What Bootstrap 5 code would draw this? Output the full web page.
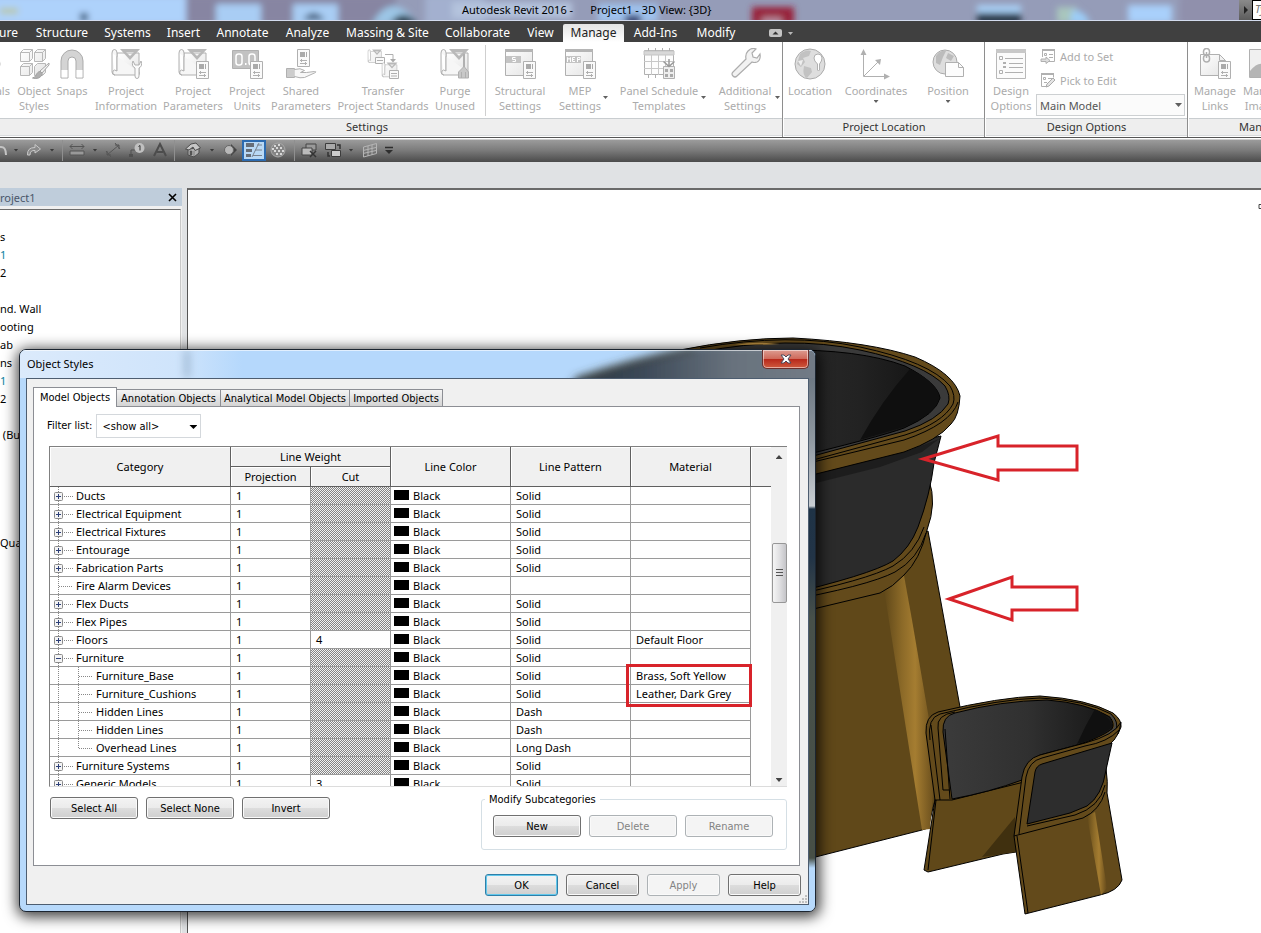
<!DOCTYPE html>
<html lang="en">
<head>
<meta charset="utf-8">
<meta name="viewport" content="width=device-width, initial-scale=1">
<title>Autodesk Revit 2016 - Project1 - 3D View: {3D}</title>
<link href="https://cdn.jsdelivr.net/npm/bootstrap@5.3.0/dist/css/bootstrap.min.css" rel="stylesheet">
<style>
  body { font: 11px/15px "Noto Sans", "Open Sans", sans-serif; color: #000; background: #e0e2e4; }
  button { font: inherit; color: inherit; background: none; border: 0; padding: 0; }
  svg { display: block; flex: none; }
  .tahoma { font-family: "DejaVu Sans Condensed", "Noto Sans", sans-serif; }

  /* title bar */
  .app-title { height: 21px; background: #959cb8; border-bottom: 1px solid #d3dbee; }
  .app-title .caption { padding-left: 462px; line-height: 20px; white-space: pre; }
  .search-area { width: 22px; background: linear-gradient(#8a8a8a, #5c5c5c); }
  .search-box { width: 9px; border: 1px solid #000; background: #fff; color: #777; font-style: italic; padding: 0 0 0 2px; border-right: 0; }

  /* ribbon tabs */
  .ribbon-tabs { height: 21px; background: #404040; color: #fff; padding-top: 3px; }
  .ribbon-tabs a { color: #fff; text-decoration: none; text-align: center; line-height: 17px; font-size: 12px; flex: none; height: 18px; white-space: nowrap; }
  .ribbon-tabs a.current { background: linear-gradient(#e4e4e4, #fff); color: #222; border-radius: 2px 2px 0 0; }
  .t28 { width: 28px; direction: rtl; overflow: hidden; padding-right: 10px; }
  .t49 { width: 49px; } .t45 { width: 45px; } .t58 { width: 58px; } .t61 { width: 61px; } .t63 { width: 63px; } .t68 { width: 68px; }
  .t69 { width: 69px; } .t81 { width: 81px; } .t99 { width: 99px; }

  /* ribbon */
  .ribbon { background: #fff; height: 95px; }
  .rpanel { border-right: 1px solid #8e8e8e; margin-right: 1px; flex: none; }
  .rpanel-first { margin-left: -48px; }
  .rpanel-body { height: 76px; }
  .rpanel-name { height: 18px; line-height: 16px; background: #eeeeee; border-top: 1px solid #c9cdd0; border-bottom: 1px solid #dadcde; text-align: center; color: #333; }
  .rbtn { color: #ababab; display: flex; flex-direction: column; align-items: center; padding-top: 6px; flex: none; position: relative; white-space: nowrap; }
  .rbtn svg { margin-bottom: 3px; }
  .rbtn .tri { margin: 2px 0 0; }
  .rbtn .tri-side { position: absolute; right: 2px; top: 54px; margin: 0; }
  .tri { width: 5px; height: 3px; background: #606060; clip-path: polygon(0 0, 100% 0, 50% 100%); flex: none; }
  .r36 { width: 36px; } .r40 { width: 40px; } .r42 { width: 42px; } .r46 { width: 46px; } .r48 { width: 48px; } .r52 { width: 52px; }
  .r60 { width: 60px; } .r66 { width: 66px; } .r68 { width: 68px; } .r72 { width: 72px; } .r74 { width: 74px; } .r98 { width: 98px; }
  .rsep { width: 1px; background: #cfcfcf; margin: 3px 4px 2px 7px; }
  .rstack { padding: 2px 2px 0 0; }
  .rline { color: #ababab; height: 24px; }
  .model-select { width: 149px; height: 22px; border: 1px solid #cdd0d2; border-radius: 0; appearance: none; background: #fbfbfb; color: #555; padding: 0 3px; margin-top: 2px; font-size: 11px; display: block; }
  .model-tri { position: absolute; right: 3px; top: 11px; width: 7px; height: 4px; background: #606060; clip-path: polygon(0 0, 100% 0, 50% 100%); pointer-events: none; }
  .rpanel-last { width: 182px; }

  /* quick access bar */
  .qat { height: 25px; border-top: 1px solid #555; background: linear-gradient(#fff 0 1px, #9b9b9b 2px, #7c7c7c 50%, #4b4b4b); }
  .qat button { display: flex; align-items: center; justify-content: center; height: 20px; flex: none; }
  .q10 { width: 10px; } .q12 { width: 12px; } .q16 { width: 16px; } .q20 { width: 20px; } .q24 { width: 24px; } .q27 { width: 27px; }
  .qat .tri { background: #3a3a3a; }
  .qsep { width: 1px; height: 21px; background: #8f8f8f; flex: none; }
  .qat .picked { background: #b9d9f5; border: 2px solid #2c6bb0; height: 21px; }
  .options-bar { height: 26px; background: #e0e2e4; }

  /* project browser */
  .browser { width: 182px; flex: none; background: #f0f0f0; }
  .browser-head { height: 18px; background: #bfcddb; color: #49566a; padding-right: 5px; }
  .browser-list { margin: 3px 1px 0 0; border-top: 1px solid #6d6d6d; border-right: 1px solid #c8c8c8; background: #fff; line-height: 18px; padding-top: 18px; overflow: hidden; white-space: nowrap; }
  .browser-list li { height: 18px; }
  .cyan { color: #0a7f9e; }
  .canvas { margin-left: 5px; border-left: 1px solid #555; border-top: 2px solid #6a6a6a; background: #fff; overflow: hidden; }

  /* object styles window */
  .dlg { position: absolute; left: 19px; top: 161px; width: 797px; border: 1px solid #1c2530; border-radius: 7px; overflow: hidden; background: #b7d9fb; }
  .dlg-shadow { position: absolute; left: 19px; top: 161px; width: 797px; height: 562px; border-radius: 7px; box-shadow: 1px 3px 14px 3px rgba(0,0,0,.75); }
  .dlg-title { height: 28px; padding-left: 7px; line-height: 27px; position: relative; }
  .dlg-glass { position: absolute; inset: 0; }
  .dlg-edge { position: absolute; right: 0; top: 28px; bottom: 0; width: 7px; background: linear-gradient(#6d7883, #8e979f 60px, #c9ced3 128px, #1f3346 131px, #223447 180px, #47504a 240px, #474f46 480px, #b7d9fb 490px); }
  .dlg-close { position: absolute; right: 6px; top: 0; width: 47px; height: 19px; border: 1px solid #6b2f2c; border-top: 0; border-radius: 0 0 5px 5px; background: linear-gradient(#dd9c91, #cf6a5b 48%, #b8291b 52%, #cf5a3e); box-shadow: inset 0 0 0 1px rgba(255,255,255,.5); display: flex; align-items: center; justify-content: center; }
  .client { margin: 0 6px 6px; position: relative; background: #f0f0f0; border: 1px solid #4d5d70; padding: 8px 7px 8px 6px; }
  .tabstrip { height: 19px; }
  .tabstrip button { border: 1px solid #8c8e94; border-left: 0; border-bottom: 0; height: 17px; line-height: 15px; background: linear-gradient(#f4f4f4, #d4d4d4); white-space: nowrap; }
  .tabstrip button.active { height: 20px; background: #fff; border-left: 1px solid #8c8e94; position: relative; margin-bottom: -1px; }
  .w84 { width: 84px; } .w104 { width: 104px; } .w129 { width: 129px; } .w93 { width: 93px; }
  .sheet { border: 1px solid #8c8e94; background: #fff; padding: 7px 12px 15px 13px; margin-right: 1px; }
  .filter-select { width: 105px; height: 24px; appearance: none; border: 1px solid #d4d8dc; border-radius: 0; background: #fff; padding: 0 5px; }
  .filter-tri { position: absolute; right: 4px; top: 11px; width: 8px; height: 4px; background: #000; clip-path: polygon(0 0, 100% 0, 50% 100%); pointer-events: none; }
  .gridbox { height: 341px; margin-left: 2px; border-top: 1px solid #808080; border-left: 1px solid #808080; border-bottom: 1px solid #dcdcdc; overflow: hidden; position: relative; }
  .styles { border-collapse: separate; border-spacing: 0; table-layout: fixed; width: 721px; line-height: 17px; font-family: "Noto Sans", sans-serif; }
  .styles th { font-weight: 400; background: #f0f0f0; text-align: center; border-right: 1px solid #606060; border-bottom: 1px solid #606060; height: 20px; padding: 0; box-shadow: inset 1px 1px #fff; }
  .styles td { height: 18px; padding: 0 0 0 5px; border-right: 1px solid #9a9a9a; border-bottom: 1px solid #9a9a9a; white-space: nowrap; }
  .styles th:last-child, .styles td:last-child { border-right: 0; }
  .styles thead tr:last-child th:last-child { border-right: 1px solid #606060; }
  .styles th.filler { border-right: 0; }
  .styles td:last-child { border-bottom: 0; }
  .styles td.tree { padding: 0; }
  .styles td.na { background: repeating-conic-gradient(#848484 0 25%, #f2f2f2 0 50%) 0 0 / 2px 2px; }
  .styles td.ink { padding-left: 3px; }
  .swatch { display: inline-block; width: 15px; height: 10px; background: #000; margin-right: 4px; }
  .sbar { width: 16px; background: #f0f0f0; }
  .tri-up { width: 7px; height: 4px; background: #444; clip-path: polygon(50% 0, 100% 100%, 0 100%); margin-bottom: 84px; }
  .tri-down { width: 7px; height: 4px; background: #444; clip-path: polygon(0 0, 100% 0, 50% 100%); }
  .thumb { width: 15px; height: 60px; border: 1px solid #979797; border-radius: 2px; background: linear-gradient(90deg, #f5f5f5, #e0e0e2 50%, #c4c4c8); }
  .callout { position: absolute; left: 576px; top: 217px; width: 126px; height: 43px; border: 3px solid #d8232a; }
  .wbtn { width: 88px; height: 22px; border: 1px solid #707070; border-radius: 3px; background: linear-gradient(#f3f3f3, #ebebeb 50%, #dddddd 50%, #cfcfcf); box-shadow: inset 0 0 0 1px #fafafa; }
  .wbtn:disabled { color: #838383; border-color: #adb2b5; background: #f4f4f4; }
  .wbtn-s { width: 73px; }
  .wbtn-ok { border-color: #2f7fa8; box-shadow: inset 0 0 0 1px #62c8ec; }
  .pickers { padding: 10px 0 0 3px; }
  .subcats { border: 1px solid #d5dfe5; border-radius: 3px; width: 306px; padding: 8px 11px 12px; margin: 5px 0 0; }
  .subcats legend { float: none; width: auto; font-size: inherit; line-height: 15px; padding: 0 4px; margin: 0 0 0 -8px; }
  .grip { position: absolute; right: 1px; bottom: 1px; }
</style>
</head>
<body class="min-vh-100 d-flex flex-column overflow-hidden">

<!-- icon shapes -->
<svg width="0" height="0" class="position-absolute" aria-hidden="true">
  <defs>
    <linearGradient id="metal" x2="1" y2="1"><stop offset="0" stop-color="#fff"/><stop offset="1" stop-color="#e4e4e4"/></linearGradient>
    <g id="scroll-base"><path d="M7 5h22v21H7z" fill="url(#metal)"/><path d="M2 5q0-3.500 2.500-3.500T7 5v18q-3-2-4 0t1 4H29v-3M2 5v19q0 3 3 3" fill="#f6f6f6"/><path d="M10 1H30L20 12zM16 4l4 4 4-4z" fill="#b9b9b9" fill-rule="evenodd" stroke="none"/></g>
    <g id="sheet-tag"><path d="M19.500 13.500h12v17h-12z" fill="#fafafa"/><path d="M22 16h5v5h-5zM28 16h1v5h-1z" fill="#aaa" stroke="none"/><path d="M22 24.500h7M22 27.500h7M23.500 23v3M27.500 26v3"/></g>
    <g id="win"><path d="M1.500 1.500h27v26h-27z" fill="url(#metal)"/><path d="M1 1h28v3H1z" fill="#b5b5b5" stroke="none"/></g>
    <symbol id="i-materials" viewBox="0 0 32 32"><circle cx="16" cy="16" r="14" fill="#eee" stroke="#b3b3b3"/></symbol>
    <symbol id="i-object" viewBox="0 0 32 32"><g fill="url(#metal)" stroke="#b8b8b8"><path d="M2.500 4.500l3-3h9v9l-3 3h-9zM16.500 4.500l3-3h8v9l-3 3h-8zM2.500 18.500l3-3h9v9l-3 3h-9zM16.500 18.500l3-3h8v9l-3 3h-8z"/><path d="M2.500 4.500h9l3-3M11.500 4.500v9M16.500 4.500h8l3-3M24.500 4.500v9M2.500 18.500h9l3-3M11.500 18.500v9" fill="none"/><path d="M31 15l-9 8 2 2 7-8z" fill="#f4f4f4" stroke="#a5a5a5"/><path d="M21.500 23l3 3q-3 6-10 4 4-1 4-4z" fill="#b0b0b0" stroke="#a0a0a0"/></g></symbol>
    <symbol id="i-snaps" viewBox="0 0 32 32"><path d="M5 30V13a11 11 0 0 1 22 0v17h-7V13a4 4 0 0 0-8 0v17z" fill="#d4d4d4" stroke="#ababab"/><path d="M5.500 22h6v7.500h-6zM20.500 22h6v7.500h-6z" fill="#fff"/></symbol>
    <symbol id="i-info" viewBox="0 0 32 32"><g fill="none" stroke="#b0b0b0"><use href="#scroll-base"/><path d="M23 13q-2 5 2 7v8q0 2.500 2 2.500t2-2.500v-8q4-2 2-7l-2 4h-4z" fill="#fafafa"/></g></symbol>
    <symbol id="i-param" viewBox="0 0 32 32"><g fill="none" stroke="#b0b0b0"><use href="#scroll-base"/><use href="#sheet-tag"/></g></symbol>
    <symbol id="i-units" viewBox="0 0 32 32"><g fill="none" stroke="#b0b0b0"><path d="M1.500 2.500h26v18h-26z" fill="#c2c2c2"/><rect x="5" y="6" width="6" height="11" rx="2.500" stroke="#fff" stroke-width="1.500"/><path d="M14 16h1.500" stroke="#fff" stroke-width="2"/><rect x="18" y="6" width="6" height="11" rx="2.500" stroke="#fff" stroke-width="1.500"/><use href="#sheet-tag"/></g></symbol>
    <symbol id="i-shared" viewBox="0 0 32 32"><g fill="none" stroke="#b0b0b0"><use href="#sheet-tag" transform="translate(-7 -12)"/><path d="M1.500 20.500h8v9h-8z" fill="#ccc"/><path d="M9.500 21.500q6-2 10 1l-4 2h6l8-1q2 0 1 1l-11 5q-4 1-10-1" fill="#f7f7f7"/></g></symbol>
    <symbol id="i-transfer" viewBox="0 0 32 32"><g fill="none" stroke="#b0b0b0"><use href="#scroll-base" transform="translate(0 1) scale(.5)"/><path d="M8.500 9.500h9v6h-9z" fill="#fafafa"/><path d="M10 12.500h6M18 6.500h8v6"/><path d="M23 11h6l-3 3.500z" fill="#aaa" stroke="none"/><use href="#scroll-base" transform="translate(14 14) scale(.55)"/><path d="M22.500 22.500h9v8h-9z" fill="#fafafa"/><path d="M24 25.500h6M24 28h6"/></g></symbol>
    <symbol id="i-purge" viewBox="0 0 32 32"><g fill="none" stroke="#b0b0b0"><use href="#scroll-base"/><path d="M24.500 6h1v13l4 5v6h-10v-6l5-5z" fill="#c8c8c8"/><path d="M22.500 24v6M26.500 24v6"/></g></symbol>
    <symbol id="i-struct" viewBox="0 0 32 32"><g fill="none" stroke="#b0b0b0"><use href="#win"/><path d="M2 8h15v7H2z" fill="#c4c4c4" stroke="none"/><path d="M11.500 9.500h-3v2h3v2h-3" stroke="#fff"/><use href="#sheet-tag"/></g></symbol>
    <symbol id="i-mep" viewBox="0 0 32 32"><g fill="none" stroke="#b0b0b0"><use href="#win"/><path d="M2 8h15v7H2z" fill="#c4c4c4" stroke="none"/><path d="M3.500 14V9.500l1.500 2 1.500-2V14M11 9.500H8.500v4H11M8.500 11.500h2M13.500 14V9.500H16v2h-2" stroke="#fff"/><use href="#sheet-tag"/></g></symbol>
    <symbol id="i-panel" viewBox="0 0 32 32"><g fill="none" stroke="#b0b0b0"><path d="M1.500 2.500h29v24h-29z" fill="#fdfdfd"/><path d="M1 3h30v4H1z" fill="#d8d8d8" stroke="#c4c4c4"/><path d="M1 13.500h30M1 20.500h30M8.500 7v20M15.500 7v20M22.500 7v20" stroke="#c8c8c8"/><path d="M5.500 0v3M12.500 0v3M19.500 0v3M26.500 0v3M5.500 27v3M12.500 27v3"/><path d="M20.500 18.500h11v12h-11z" fill="#eee"/><path d="M22 21h3v3h-3zM27 21h3v3h-3zM22 26h3v3h-3zM27 26h3v3h-3z" fill="#aaa" stroke="none"/><path d="M26 11v7M20.500 13.500l5.500 5 5.500-5" stroke="#999" stroke-width="1.500"/></g></symbol>
    <symbol id="i-wrench" viewBox="0 0 32 32"><path d="M19 3q4-4 8-2l-4 4 1 4 4 1 3-4q1 6-3 8-3 1-5 0L8 28q-2 2-4 0t0-4L17 11q-1-5 2-8z" fill="#f2f2f2" stroke="#adadad" stroke-width="1.200"/></symbol>
    <symbol id="i-globe" viewBox="0 0 32 32"><circle cx="16" cy="16" r="15" fill="#dedede" stroke="#ababab"/><path d="M6 6q6-5 11-3l-2 5-6 2 2 4-4 5-4-3zM10 18l7 2 1 4-5 6q-5-2-3-12z" fill="#c2c2c2"/><path d="M4 13l5-1-2 6z" fill="#eee"/><path d="M20 10a4 4 0 0 1 8 0q0 3-2.500 6v6l-1 1-1-1v-6Q20 13 20 10z" fill="#fff" stroke="#b0b0b0"/></symbol>
    <symbol id="i-coord" viewBox="0 0 32 32"><g fill="none" stroke="#b0b0b0"><path d="M3.500 5v23.500H28M4 28L18 14"/></g><path d="M3.500 1L6.500 7h-6zM30 28.500l-6 3v-6zM21 11l-1 6-5-5z" fill="#b0b0b0"/></symbol>
    <symbol id="i-pos" viewBox="0 0 32 32"><circle cx="13" cy="14" r="12" fill="#dedede" stroke="#ababab"/><path d="M4 8q4-6 10-5l-3 6-3 8-4-2zM16 5l6 3-3 5-5-3z" fill="#bcbcbc"/><path d="M13.500 14.500h13l5 5v9h-18z" fill="#fcfcfc" stroke="#b0b0b0"/><path d="M26.500 14.500v5h5" fill="none" stroke="#b0b0b0"/></symbol>
    <symbol id="i-design" viewBox="0 0 32 32"><path d="M1.500 1.500h29v29h-29z" fill="#fbfbfb" stroke="#b8b8b8"/><path d="M1 1h30v4H1z" fill="#c8c8c8"/><g stroke="#b0b0b0" fill="none"><path d="M4.500 8.500h3v3h-3zM4.500 22.500h3v3h-3zM10 10.500h18M14 15.500h14M14 19.500h14M10 24.500h18"/></g><path d="M8 14h3v2H8zM8 18h3v2H8z" fill="#b0b0b0"/></symbol>
    <symbol id="i-links" viewBox="0 0 32 32"><g fill="none" stroke="#b0b0b0"><path d="M1.500 6.500h19l6 6v15h-25z" fill="url(#metal)"/><path d="M20.500 6.500v6h6"/><use href="#sheet-tag"/><rect x="4.500" y=".5" width="6" height="7" rx="3" stroke-width="1.500"/><rect x="4.500" y="7" width="6" height="7" rx="3" stroke-width="1.500"/><path d="M7.500 4v6" stroke-width="1.500"/></g></symbol>
    <symbol id="i-images" viewBox="0 0 32 32"><path d="M1.500 1.500h29v28h-29z" fill="#f0f0f0" stroke="#b0b0b0"/><path d="M2 23q10-12 17-4l11 10H2z" fill="#b5b5b5"/></symbol>
    <symbol id="i-addset" viewBox="0 0 16 16"><path d="M2.500 1.500h12v12h-7" fill="none" stroke="#b0b0b0"/><path d="M2 1h13v2H2z" fill="#b0b0b0"/><path d="M2.500 3v6M4.500 5.500h2v2h-2zM9 6.500h4M9 9.500h4" fill="none" stroke="#b0b0b0"/><path d="M1 11h5V9l4 3.500L6 15.500v-2H1z" fill="#ddd" stroke="#b0b0b0"/></symbol>
    <symbol id="i-pick" viewBox="0 0 16 16"><path d="M8 14.500H1.500v-13h12v4" fill="none" stroke="#b0b0b0"/><path d="M1 1h13v2H1z" fill="#b0b0b0"/><path d="M3.500 5.500h2v2h-2zM8 6.500h4M4 10.500h3" fill="none" stroke="#b0b0b0"/><path d="M7 12l6-6 2 2-6 6-3 1z" fill="#e4e4e4" stroke="#aaa"/></symbol>
    <symbol id="t-plus" viewBox="0 0 26 17"><path d="M8.500 0v17M14 9.500h9" stroke="#888" stroke-dasharray="1 1"/><rect x="4.500" y="5.500" width="8" height="8" rx="1" fill="#f4f4f4" stroke="#8a8a8a"/><path d="M6 9.500h5M8.500 7v5" stroke="#2c3f78"/></symbol>
    <symbol id="t-minus" viewBox="0 0 26 17"><path d="M8.500 0v17M14 9.500h9" stroke="#888" stroke-dasharray="1 1"/><rect x="4.500" y="5.500" width="8" height="8" rx="1" fill="#f4f4f4" stroke="#8a8a8a"/><path d="M6 9.500h5" stroke="#2c3f78"/></symbol>
    <symbol id="t-leaf" viewBox="0 0 26 17"><path d="M8.500 0v17M9 9.500h14" stroke="#888" stroke-dasharray="1 1"/></symbol>
    <symbol id="t-child" viewBox="0 0 46 17"><path d="M8.500 0v17M28.500 0v17M29 9.500h14" stroke="#888" stroke-dasharray="1 1"/></symbol>
    <symbol id="t-last" viewBox="0 0 46 17"><path d="M8.500 0v17M28.500 0v10M29 9.500h14" stroke="#888" stroke-dasharray="1 1"/></symbol>
  </defs>
</svg>

<header>
  <div class="app-title d-flex position-relative overflow-hidden">
    <svg class="position-absolute top-0 start-0 w-100 h-100" viewBox="0 0 1261 20" preserveAspectRatio="none" aria-hidden="true">
      <filter id="soft" x="-20%" y="-50%" width="140%" height="200%"><feGaussianBlur stdDeviation="3"/></filter>
      <g filter="url(#soft)">
        <path d="M-10-5h200v30H-10z" fill="#aed2fb"/><path d="M186-5h210v30H186z" fill="#8785a2"/><path d="M0 8h18v6H0z" fill="#b9c8a8"/>
        <path d="M80 13h8v8h-8z" fill="#2f5274"/><path d="M216 4h45v22h-45zM293 4h45v22h-45z" fill="#a9cdf4"/><path d="M303 20q10-14 22 0z" fill="#35506e"/>
        <path d="M372 24q20-36 46 0z" fill="#9cc6e6"/><path d="M390 24q12-18 28 0z" fill="#1f3340"/><path d="M425-5h60v30h-60z" fill="#a3b0cf"/>
        <path d="M452 2h120v16H452z" fill="#b4c3dd"/><path d="M598 4h60v18h-60z" fill="#9fc2ee"/><path d="M625 15h16v8h-16z" fill="#26346a"/>
        <path d="M752 7h42v18h-42z" fill="#98233a"/><path d="M762 17h20v8h-20z" fill="#b5879a"/>
        <path d="M977 5h44v8h-44z" fill="#a9d0f6"/><path d="M977 13h44v10h-44z" fill="#1c2d3c"/><path d="M1057 7h20v16h-20z" fill="#a9c6bd"/><path d="M1072 10q14 0 18 14h-20z" fill="#9ccdf8"/>
        <path d="M1128 5h44v18h-44z" fill="#a9d0fb"/><path d="M1180-5h90v30h-90z" fill="#9090ac"/>
      </g>
    </svg>
    <div class="caption position-relative flex-grow-1">Autodesk Revit 2016 -      Project1 - 3D View: {3D}</div>
    <div class="search-area position-relative d-flex justify-content-between flex-shrink-0">
      <svg width="13" height="20" viewBox="0 0 13 20"><path d="M5 6l4 4-4 4z" fill="#222"/></svg>
      <div class="search-box overflow-hidden">Ty</div>
    </div>
  </div>

  <nav class="ribbon-tabs d-flex" aria-label="Ribbon tabs">
    <a href="#" class="t28">Architecture</a>
    <a href="#" class="t68">Structure</a>
    <a href="#" class="t63">Systems</a>
    <a href="#" class="t49">Insert</a>
    <a href="#" class="t69">Annotate</a>
    <a href="#" class="t61">Analyze</a>
    <a href="#" class="t99">Massing &amp; Site</a>
    <a href="#" class="t81">Collaborate</a>
    <a href="#" class="t45">View</a>
    <a href="#" class="t61 current">Manage</a>
    <a href="#" class="t63">Add-Ins</a>
    <a href="#" class="t58">Modify</a>
    <button class="d-flex align-items-center gap-1 ms-4" type="button" aria-label="Minimize ribbon">
      <svg width="13" height="8" viewBox="0 0 13 8"><rect width="13" height="8" rx="2" fill="#c4c4c4"/><path d="M3.500 5.500l3-3 3 3z" fill="#333"/></svg>
      <svg width="9" height="8" viewBox="0 0 9 8"><path d="M2 3h5L4.500 6z" fill="#b8b8b8"/></svg>
    </button>
  </nav>

  <div class="ribbon d-flex overflow-hidden">
    <section class="rpanel rpanel-first">
      <div class="rpanel-body d-flex ps-1">
        <button class="rbtn r60" type="button"><svg width="32" height="32"><use href="#i-materials"/></svg>Materials</button>
        <button class="rbtn r36" type="button"><svg width="32" height="32"><use href="#i-object"/></svg>Object<br>Styles</button>
        <button class="rbtn r40" type="button"><svg width="32" height="32"><use href="#i-snaps"/></svg>Snaps</button>
        <button class="rbtn r68" type="button"><svg width="32" height="32"><use href="#i-info"/></svg>Project<br>Information</button>
        <button class="rbtn r66" type="button"><svg width="32" height="32"><use href="#i-param"/></svg>Project<br>Parameters</button>
        <button class="rbtn r42" type="button"><svg width="32" height="32"><use href="#i-units"/></svg>Project<br>Units</button>
        <button class="rbtn r66" type="button"><svg width="32" height="32"><use href="#i-shared"/></svg>Shared<br>Parameters</button>
        <button class="rbtn r98" type="button"><svg width="32" height="32"><use href="#i-transfer"/></svg>Transfer<br>Project Standards</button>
        <button class="rbtn r46" type="button"><svg width="32" height="32"><use href="#i-purge"/></svg>Purge<br>Unused</button>
        <div class="rsep"></div>
        <button class="rbtn r60" type="button"><svg width="32" height="32"><use href="#i-struct"/></svg>Structural<br>Settings</button>
        <button class="rbtn r60" type="button"><svg width="32" height="32"><use href="#i-mep"/></svg>MEP<br>Settings<span class="tri tri-side"></span></button>
        <button class="rbtn r98" type="button"><svg width="32" height="32"><use href="#i-panel"/></svg>Panel Schedule<br>Templates<span class="tri tri-side"></span></button>
        <button class="rbtn r74" type="button"><svg width="32" height="32"><use href="#i-wrench"/></svg>Additional<br>Settings<span class="tri tri-side"></span></button>
      </div>
      <div class="rpanel-name">Settings</div>
    </section>
    <section class="rpanel">
      <div class="rpanel-body d-flex">
        <button class="rbtn r52" type="button"><svg width="32" height="32"><use href="#i-globe"/></svg>Location</button>
        <button class="rbtn r72 ms-1" type="button"><svg width="32" height="32"><use href="#i-coord"/></svg>Coordinates<span class="tri"></span></button>
        <button class="rbtn r72" type="button"><svg width="32" height="32"><use href="#i-pos"/></svg>Position<span class="tri"></span></button>
      </div>
      <div class="rpanel-name">Project Location</div>
    </section>
    <section class="rpanel">
      <div class="rpanel-body d-flex gap-1 ps-1">
        <button class="rbtn r42" type="button"><svg width="32" height="32"><use href="#i-design"/></svg>Design<br>Options</button>
        <div class="rstack d-flex flex-column">
          <button class="rline d-flex align-items-center gap-1 ps-1" type="button"><svg width="16" height="16"><use href="#i-addset"/></svg>Add to Set</button>
          <button class="rline d-flex align-items-center gap-1 ps-1" type="button"><svg width="16" height="16"><use href="#i-pick"/></svg>Pick to Edit</button>
          <div class="position-relative">
            <select class="model-select" aria-label="Active design option"><option>Main Model</option></select>
            <span class="model-tri"></span>
          </div>
        </div>
      </div>
      <div class="rpanel-name">Design Options</div>
    </section>
    <section class="rpanel rpanel-last">
      <div class="rpanel-body d-flex">
        <button class="rbtn r52" type="button"><svg width="32" height="32"><use href="#i-links"/></svg>Manage<br>Links</button>
        <button class="rbtn r46" type="button"><svg width="32" height="32"><use href="#i-images"/></svg>Manage<br>Images</button>
      </div>
      <div class="rpanel-name">Manage Project</div>
    </section>
  </div>

  <div class="qat d-flex align-items-center overflow-hidden">
    <button type="button" class="q10" aria-label="Undo"><svg width="10" height="16" viewBox="0 0 10 16"><path d="M0 5q6-1 6 8" fill="none" stroke="#c4c4c4" stroke-width="2"/></svg></button>
    <button type="button" class="q12" aria-label="Undo list"><span class="tri"></span></button>
    <button type="button" class="q24" aria-label="Redo"><svg width="16" height="16" viewBox="0 0 16 16"><path d="M1.500 13Q1 5.500 9 5.500V2.500l5.500 4.500L9 11V8.500Q4 8 4 13z" fill="#8a8a8a" stroke="#c9c9c9"/></svg></button>
    <button type="button" class="q12" aria-label="Redo list"><span class="tri"></span></button>
    <span class="qsep mx-1"></span>
    <button type="button" class="q20" aria-label="Measure"><svg width="16" height="16" viewBox="0 0 16 16"><path d="M1 4.500h14M3.500 2L1 4.500 3.500 7M12.500 2L15 4.500 12.500 7" fill="none" stroke="#555"/><path d="M1 9h14v4H1z" fill="#999" stroke="#555"/></svg></button>
    <button type="button" class="q16" aria-label="Measure list"><span class="tri"></span></button>
    <button type="button" class="q20" aria-label="Aligned dimension"><svg width="18" height="16" viewBox="0 0 18 16"><path d="M3 13L15 3M2 9l5 6M11 1l5 6M3 9v4h4M11 3h4v4" fill="none" stroke="#565656"/></svg></button>
    <button type="button" class="q27" aria-label="Tag by category"><svg width="16" height="16" viewBox="0 0 16 16"><path d="M2 14V8h5" fill="none" stroke="#505050"/><path d="M0 12h4v3H0z" fill="#505050"/><circle cx="10.500" cy="6" r="5" fill="#c0c0c0"/><path d="M9.500 4.500l1.500-1v5" fill="none" stroke="#333"/></svg></button>
    <button type="button" class="q20" aria-label="Text"><svg width="14" height="16" viewBox="0 0 14 16"><path d="M1 14L7 2l6 12M4 10h6" fill="none" stroke="#4c4c4c" stroke-width="2"/></svg></button>
    <span class="qsep mx-1"></span>
    <button type="button" class="q27" aria-label="Default 3D view"><svg width="16" height="16" viewBox="0 0 16 16"><path d="M3 7v6l6 2 5-4V6z" fill="#b0b0b0" stroke="#4d4d4d"/><path d="M0.500 7L6 2l5-1 4.500 5-5.500 2.500L8 5 4 8z" fill="#c6c6c6" stroke="#4d4d4d"/><path d="M9 9v6M5 9h2v4H5z" fill="#555" stroke="#4d4d4d" stroke-width=".5"/></svg></button>
    <button type="button" class="q12" aria-label="3D list"><span class="tri"></span></button>
    <button type="button" class="q24" aria-label="Section"><svg width="16" height="16" viewBox="0 0 16 16"><path d="M9 2l6 6-6 6z" fill="#444"/><circle cx="7" cy="8" r="4.500" fill="#b8b8b8" stroke="#666"/></svg></button>
    <button type="button" class="q24 picked" aria-label="Thin lines"><svg width="18" height="16" viewBox="0 0 18 16"><path d="M1 1h8v4H1zM1 7h6v3H1zM1 12h5v3H1z" fill="#666e78"/><path d="M7 15L14 1M12 3h5M10 8h7M8 13.500h9" stroke="#78828e" fill="none"/></svg></button>
    <button type="button" class="q24" aria-label="Rendering"><svg width="16" height="16" viewBox="0 0 16 16"><circle cx="8" cy="8" r="7" fill="#858585" stroke="#a8a8a8"/><path d="M4 3h2v2H4zM8 2h2v2H8zM6 5h2v2H6zM10 5h2v2h-2zM2 6h2v2H2zM4 8h2v2H4zM8 8h2v2H8zM12 8h2v2h-2zM6 11h2v2H6zM10 11h2v2h-2z" fill="#d8d8d8"/></svg></button>
    <span class="qsep mx-1"></span>
    <button type="button" class="q20" aria-label="Close hidden windows"><svg width="16" height="16" viewBox="0 0 16 16"><path d="M5 2h10v6H5z" fill="#999" stroke="#444"/><path d="M1 6h10v7H1z" fill="#bbb" stroke="#444"/><path d="M9 9l6 6M15 9l-6 6" stroke="#333" stroke-width="1.500"/></svg></button>
    <button type="button" class="q27" aria-label="Switch windows"><svg width="18" height="16" viewBox="0 0 18 16"><path d="M1.500 1.500h10v6h-10z" fill="#aaa" stroke="#3c3c3c"/><path d="M7.500 8.500h9v6h-9z" fill="#ccc" stroke="#3c3c3c"/><path d="M13 3h3v4M4 10v4h2" fill="none" stroke="#333" stroke-width="1.500"/></svg></button>
    <button type="button" class="q10" aria-label="Windows list"><span class="tri"></span></button>
    <button type="button" class="q27" aria-label="User interface"><svg width="16" height="16" viewBox="0 0 16 16"><path d="M1.500 5l13-3.500v10l-13 3.500zM6 4v10M10 3v10M1 8.500l13-3M1 11.500l13-3" fill="none" stroke="#b5b5b5"/></svg></button>
    <button type="button" class="q12" aria-label="Customize"><svg width="10" height="9" viewBox="0 0 10 9"><path d="M1 1.500h8" stroke="#2e2e2e" stroke-width="1.500"/><path d="M1 4h8L5 8z" fill="#2e2e2e"/></svg></button>
  </div>
  <div class="options-bar"></div>
</header>

<main class="flex-grow-1 d-flex position-relative">
  <aside class="browser d-flex flex-column">
    <div class="browser-head d-flex justify-content-between align-items-center">
      <span>roject1</span>
      <button type="button" aria-label="Close browser"><svg width="9" height="9" viewBox="0 0 9 9"><path d="M1 1l7 7M8 1L1 8" stroke="#000" stroke-width="1.600"/></svg></button>
    </div>
    <ul class="browser-list list-unstyled mb-0 flex-grow-1">
      <li>s</li><li class="cyan">1</li><li>2</li><li></li><li>nd. Wall</li><li>ooting</li><li>ab</li><li>ns</li><li class="cyan">1</li><li>2</li><li></li><li>&nbsp;(Bu</li><li></li><li></li><li></li><li></li><li></li><li>Qua</li>
    </ul>
  </aside>

  <div class="canvas flex-grow-1">
    <svg class="w-100 h-100" viewBox="188 190 1073 743" preserveAspectRatio="xMinYMin slice" role="img" aria-label="3D view of two chairs">
      <defs>
        <linearGradient id="gl" x1="0" x2="1"><stop offset="0" stop-color="#604819"/><stop offset=".35" stop-color="#8c6a28"/><stop offset=".6" stop-color="#a57d31"/><stop offset="1" stop-color="#63491a"/></linearGradient>
        <linearGradient id="pad" x1="0" x2="1"><stop offset="0" stop-color="#2a2a2a"/><stop offset=".5" stop-color="#222"/><stop offset="1" stop-color="#111"/></linearGradient>
        <linearGradient id="pad2" x1="0" x2="1"><stop offset="0" stop-color="#3b3b3b"/><stop offset=".5" stop-color="#303030"/><stop offset="1" stop-color="#151515"/></linearGradient>
      </defs>
      <!-- large chair -->
      <g stroke="#000" stroke-width="1" stroke-linejoin="round">
        <path d="M780 595L928 531L960 707L935 800L928 828L922 830L780 866z" fill="#604819"/>
        <path d="M884 589L903 570L912 620L936 760L930 829L922 830z" fill="url(#gl)" stroke="none"/>
        <path d="M929 480Q937 503 927 530Q920 560 904 575Q893 587 880 593L780 617V580L815 570z" fill="#634a1b"/>
        <path d="M926 533Q918 559 895 572Q868 586 780 602M924 527Q915 553 893 566Q868 580 780 598" fill="none"/>
        <path d="M780 470L941 436L934 463Q930 495 918 527Q910 548 893 561Q870 575 780 596z" fill="#2b2b2b"/>
        <path d="M780 482L905 452L939 439L922 452L880 467L780 492z" fill="#1d1d1d" stroke="none"/>
        <path d="M680 350Q740 338 793 338Q870 342 915 357Q955 374 960 396Q959 416 951 424Q938 440 904 452L780 483V400z" fill="#634a1b"/>
        <path d="M700 352Q790 335 860 350Q925 364 945 386Q951 396 948 404Q938 420 905 431L780 465V380z" fill="#3a3a3a"/>
        <path d="M780 350Q860 349 905 366Q938 383 940 398Q936 414 904 428Q880 437 780 461z" fill="url(#pad)"/>
        <path d="M910 369Q938 383 939.500 398Q936 414 904 427L860 440Q882 400 910 369z" fill="#0f0f0f" stroke="none"/>
        <path d="M700 348Q790 332 860 347Q930 362 950 386Q956 396 953 404Q943 423 905 435L780 469M958 402Q951 424 904 440L780 470" fill="none"/>
        <path d="M735 345q20-4 45-1-20 1-45 1z" fill="#b98e40" stroke="none"/>
      </g>
      <!-- small chair -->
      <g stroke="#000" stroke-width="1" stroke-linejoin="round">
        <path d="M935 800L924 870L928 872L1003 854L1016 852L1024 775L952 796z" fill="#604819"/>
        <path d="M1015 817L982 857L1016 852z" fill="#40300f" stroke="none"/>
        <path d="M935 800L926 733Q925 716 938 712Q1000 697 1040 696Q1087 699 1113 713Q1122 720 1121 727L1118 734L1040 758L1024 782L952 800z" fill="#634a1b"/>
        <path d="M931 725L940 800M936 800L928 870M938 728Q936 715 955 712M938 728L943 790h6" fill="none"/>
        <path d="M943 732Q942 716 955 713Q1000 701 1047 700Q1087 703 1110 717Q1115 724 1112 729Q1100 738 1077 745L1040 755Q1026 760 1022 780Q990 792 952 799z" fill="url(#pad2)"/>
        <path d="M1095 709Q1112 718 1112 727Q1100 738 1077 744Q1085 726 1095 709z" fill="#101010" stroke="none"/>
        <path d="M1110 715Q1117 722 1115 728Q1104 740 1077 748" fill="none" stroke="#444" stroke-width="2"/>
        <path d="M930 740Q927 718 940 714Q1000 699 1040 698Q1085 700 1111 714Q1119 722 1116 730M945 729L950 799" fill="none"/>
        <path d="M1121 722Q1119 737 1110 744L1106 768Q1108 782 1107 793L1122 880Q1118 891 1100 895L1025 914L1014 836L1022 777Q1025 759 1040 755L1085 743Q1115 735 1121 722z" fill="#634a1b"/>
        <path d="M1087 816L1095 812L1107 888L1101 895z" fill="url(#gl)" stroke="none"/>
        <path d="M1042 764L1112 743L1106 770Q1102 796 1087 806L1070 813L1027 824L1035 772Q1036 766 1042 764z" fill="#2d2d2d"/>
        <path d="M1014 836L1083 818Q1100 810 1105 792M1017 836L1028 913M1019 834L1026 777Q1029 761 1042 758L1085 746Q1108 742 1119 730M1027 826L1075 815Q1100 807 1105 785" fill="none"/>
      </g>
      <!-- pointer arrows -->
      <g fill="none" stroke="#d8232a" stroke-width="3">
        <path d="M923 459L998 436V446H1077V470H998V480z"/>
        <path d="M949 599L1012 577V587H1077V610H1012V620z"/>
      </g>
      <path d="M1262 204.500h-3v4h3" fill="none" stroke="#444"/>
    </svg>
  </div>

  <div class="dlg-shadow"></div>
  <div class="dlg" role="dialog" aria-labelledby="dlgTitle">
    <div class="dlg-title">
      <svg class="dlg-glass" width="795" height="28" viewBox="0 0 795 28" aria-hidden="true">
        <filter id="soft2" x="-20%" y="-50%" width="140%" height="200%"><feGaussianBlur stdDeviation="4"/></filter>
        <linearGradient id="sky"><stop offset="0" stop-color="#dbeafb"/><stop offset=".2" stop-color="#cfe4fb"/><stop offset=".28" stop-color="#b5d8fc"/></linearGradient>
        <linearGradient id="smoke"><stop offset="0" stop-color="#2a3644"/><stop offset=".25" stop-color="#3a4756"/><stop offset=".6" stop-color="#68727d"/><stop offset="1" stop-color="#747d88"/></linearGradient>
        <path d="M0 0h795v28H0z" fill="url(#sky)"/>
        <g filter="url(#soft2)"><path d="M165 0h4v28h-4z" fill="#8ba6c2"/><path d="M550 34Q615 10 685-6H820V40H550z" fill="url(#smoke)"/><path d="M555 30Q615 10 675-2" stroke="#3c3f36" stroke-width="5" fill="none"/></g>
        <path d="M0 .5h795" stroke="#fff" stroke-opacity=".6"/>
      </svg>
      <span id="dlgTitle" class="position-relative">Object Styles</span>
      <button class="dlg-close" type="button" aria-label="Close"><svg width="12" height="10" viewBox="0 0 12 10"><path d="M1 1h3l2 2 2-2h3L8 5l3 4H8L6 7 4 9H1l3-4z" fill="#fff" stroke="#4a4a5a"/></svg></button>
    </div>
    <div class="dlg-edge"></div>
    <div class="client tahoma">
      <div class="tabstrip d-flex align-items-end">
        <button type="button" class="active w84">Model Objects</button>
        <button type="button" class="w104">Annotation Objects</button>
        <button type="button" class="w129">Analytical Model Objects</button>
        <button type="button" class="w93">Imported Objects</button>
      </div>
      <div class="sheet">
        <div class="d-flex">
          <label for="flt" class="pt-1">Filter list:</label>
          <div class="position-relative ms-1">
            <select id="flt" class="filter-select"><option>&lt;show all&gt;</option></select>
            <span class="filter-tri"></span>
          </div>
        </div>
        <div class="gridbox d-flex justify-content-between mt-2">
          <table class="styles">
            <colgroup><col width="181"><col width="80"><col width="80"><col width="120"><col width="120"><col width="120"><col width="20"></colgroup>
            <thead>
              <tr><th rowspan="2">Category</th><th colspan="2">Line Weight</th><th rowspan="2">Line Color</th><th rowspan="2">Line Pattern</th><th rowspan="2">Material</th><th rowspan="2" class="filler"></th></tr>
              <tr><th>Projection</th><th>Cut</th></tr>
            </thead>
            <tbody>
              <tr><td class="tree"><div class="d-flex"><svg width="26" height="17"><use href="#t-plus"/></svg>Ducts</div></td><td>1</td><td class="na"></td><td class="ink"><span class="swatch"></span>Black</td><td>Solid</td><td></td><td></td></tr>
              <tr><td class="tree"><div class="d-flex"><svg width="26" height="17"><use href="#t-plus"/></svg>Electrical Equipment</div></td><td>1</td><td class="na"></td><td class="ink"><span class="swatch"></span>Black</td><td>Solid</td><td></td><td></td></tr>
              <tr><td class="tree"><div class="d-flex"><svg width="26" height="17"><use href="#t-plus"/></svg>Electrical Fixtures</div></td><td>1</td><td class="na"></td><td class="ink"><span class="swatch"></span>Black</td><td>Solid</td><td></td><td></td></tr>
              <tr><td class="tree"><div class="d-flex"><svg width="26" height="17"><use href="#t-plus"/></svg>Entourage</div></td><td>1</td><td class="na"></td><td class="ink"><span class="swatch"></span>Black</td><td>Solid</td><td></td><td></td></tr>
              <tr><td class="tree"><div class="d-flex"><svg width="26" height="17"><use href="#t-plus"/></svg>Fabrication Parts</div></td><td>1</td><td class="na"></td><td class="ink"><span class="swatch"></span>Black</td><td>Solid</td><td></td><td></td></tr>
              <tr><td class="tree"><div class="d-flex"><svg width="26" height="17"><use href="#t-leaf"/></svg>Fire Alarm Devices</div></td><td>1</td><td class="na"></td><td class="ink"><span class="swatch"></span>Black</td><td></td><td></td><td></td></tr>
              <tr><td class="tree"><div class="d-flex"><svg width="26" height="17"><use href="#t-plus"/></svg>Flex Ducts</div></td><td>1</td><td class="na"></td><td class="ink"><span class="swatch"></span>Black</td><td>Solid</td><td></td><td></td></tr>
              <tr><td class="tree"><div class="d-flex"><svg width="26" height="17"><use href="#t-plus"/></svg>Flex Pipes</div></td><td>1</td><td class="na"></td><td class="ink"><span class="swatch"></span>Black</td><td>Solid</td><td></td><td></td></tr>
              <tr><td class="tree"><div class="d-flex"><svg width="26" height="17"><use href="#t-plus"/></svg>Floors</div></td><td>1</td><td>4</td><td class="ink"><span class="swatch"></span>Black</td><td>Solid</td><td>Default Floor</td><td></td></tr>
              <tr><td class="tree"><div class="d-flex"><svg width="26" height="17"><use href="#t-minus"/></svg>Furniture</div></td><td>1</td><td class="na"></td><td class="ink"><span class="swatch"></span>Black</td><td>Solid</td><td></td><td></td></tr>
              <tr><td class="tree"><div class="d-flex"><svg width="46" height="17"><use href="#t-child"/></svg>Furniture_Base</div></td><td>1</td><td class="na"></td><td class="ink"><span class="swatch"></span>Black</td><td>Solid</td><td>Brass, Soft Yellow</td><td></td></tr>
              <tr><td class="tree"><div class="d-flex"><svg width="46" height="17"><use href="#t-child"/></svg>Furniture_Cushions</div></td><td>1</td><td class="na"></td><td class="ink"><span class="swatch"></span>Black</td><td>Solid</td><td>Leather, Dark Grey</td><td></td></tr>
              <tr><td class="tree"><div class="d-flex"><svg width="46" height="17"><use href="#t-child"/></svg>Hidden Lines</div></td><td>1</td><td class="na"></td><td class="ink"><span class="swatch"></span>Black</td><td>Dash</td><td></td><td></td></tr>
              <tr><td class="tree"><div class="d-flex"><svg width="46" height="17"><use href="#t-child"/></svg>Hidden Lines</div></td><td>1</td><td class="na"></td><td class="ink"><span class="swatch"></span>Black</td><td>Dash</td><td></td><td></td></tr>
              <tr><td class="tree"><div class="d-flex"><svg width="46" height="17"><use href="#t-last"/></svg>Overhead Lines</div></td><td>1</td><td class="na"></td><td class="ink"><span class="swatch"></span>Black</td><td>Long Dash</td><td></td><td></td></tr>
              <tr><td class="tree"><div class="d-flex"><svg width="26" height="17"><use href="#t-plus"/></svg>Furniture Systems</div></td><td>1</td><td class="na"></td><td class="ink"><span class="swatch"></span>Black</td><td>Solid</td><td></td><td></td></tr>
              <tr><td class="tree"><div class="d-flex"><svg width="26" height="17"><use href="#t-plus"/></svg>Generic Models</div></td><td>1</td><td>3</td><td class="ink"><span class="swatch"></span>Black</td><td>Solid</td><td></td><td></td></tr>
            </tbody>
          </table>
          <div class="sbar d-flex flex-column align-items-center pt-2 pb-1">
            <span class="tri-up"></span>
            <div class="thumb mb-auto d-flex align-items-center justify-content-center"><svg width="7" height="8" viewBox="0 0 7 8"><path d="M0 .5h7M0 3.500h7M0 6.500h7" stroke="#555"/></svg></div>
            <span class="tri-down"></span>
          </div>
          <div class="callout"></div>
        </div>
        <div class="d-flex justify-content-between">
          <div class="pickers d-flex gap-2">
            <button type="button" class="wbtn">Select All</button>
            <button type="button" class="wbtn">Select None</button>
            <button type="button" class="wbtn">Invert</button>
          </div>
          <fieldset class="subcats">
            <legend>Modify Subcategories</legend>
            <div class="d-flex gap-2">
              <button type="button" class="wbtn">New</button>
              <button type="button" class="wbtn" disabled>Delete</button>
              <button type="button" class="wbtn" disabled>Rename</button>
            </div>
          </fieldset>
        </div>
      </div>
      <div class="d-flex justify-content-end gap-2 mt-2">
        <button type="button" class="wbtn wbtn-s wbtn-ok">OK</button>
        <button type="button" class="wbtn wbtn-s">Cancel</button>
        <button type="button" class="wbtn wbtn-s" disabled>Apply</button>
        <button type="button" class="wbtn wbtn-s">Help</button>
      </div>
      <svg class="grip" width="9" height="9" viewBox="0 0 9 9" aria-hidden="true"><path d="M7 1h2v2H7zM4 4h2v2H4zM7 4h2v2H7zM1 7h2v2H1zM4 7h2v2H4zM7 7h2v2H7z" fill="#c0c0c0"/></svg>
    </div>
  </div>
</main>
<script src="https://cdn.jsdelivr.net/npm/bootstrap@5.3.0/dist/js/bootstrap.bundle.min.js"></script>
</body>
</html>
